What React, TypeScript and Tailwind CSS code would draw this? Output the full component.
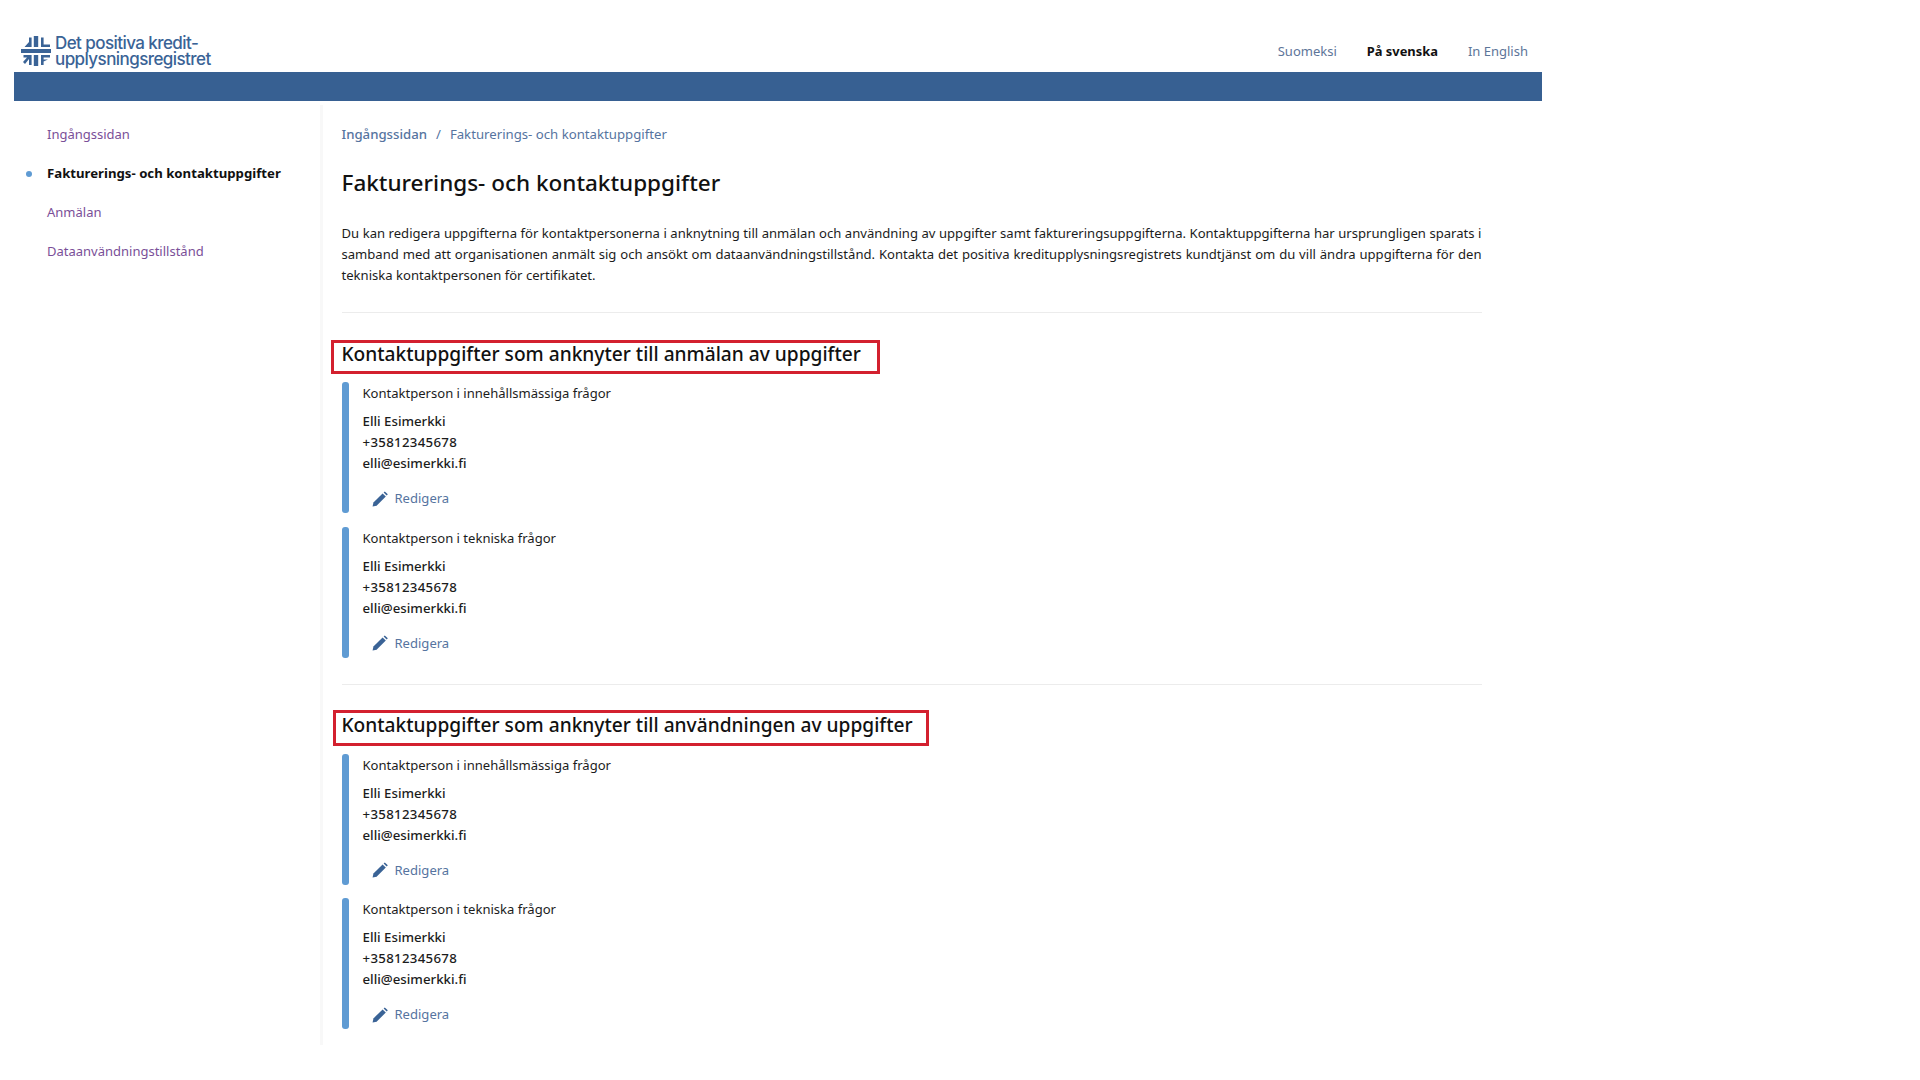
import React from "react";

function Pencil() {
  return (
    <svg viewBox="0 0 16 16" className="w-[16px] h-[16px] shrink-0" fill="#3a6396">
      <path d="M0.6 15.6 L1.4 11.4 L10.6 2.4 L13.8 5.5 L4.6 14.7 Z" />
      <path d="M11.6 1.6 L12.8 0.4 L15.8 3.3 L14.7 4.6 Z" />
    </svg>
  );
}

function Logo() {
  return (
    <svg viewBox="0 0 30 30" className="w-[30px] h-[30px] shrink-0" fill="#3a6396">
      <rect x="0" y="13" width="30" height="4" />
      <rect x="12.8" y="0" width="4.4" height="11" />
      <rect x="12.8" y="19" width="4.4" height="11" />
      <path d="M3.5 11 L10.6 11 L10.6 1.5 L8 1.5 L8 6 Z" />
      <path d="M20 1.5 L22.6 1.5 L22.6 8.5 L29 8.5 L29 11 L20 11 Z" />
      <path d="M2.5 19 L10.6 19 L10.6 29 L8 29 L8 23 L4 28 L2 26 L6 21.5 L2.5 21.5 Z" />
      <path d="M20 19 L29 19 L29 21.5 L22.6 21.5 L22.6 23.5 L27 23.5 L22.6 25.5 L22.6 29 L20 29 Z" />
    </svg>
  );
}

function Card({ title }: { title: string }) {
  return (
    <div className="flex h-[131px]">
      <div className="w-[7px] rounded-[3px] bg-[#5f9bd3] shrink-0" />
      <div className="ml-[14px] pt-[1px] text-[13.05px] leading-[21px] text-[#1c1c1c]">
        <div>{title}</div>
        <div className="mt-[7px] font-medium text-[13.25px]">
          <div>Elli Esimerkki</div>
          <div className="tracking-[0.3px]">+35812345678</div>
          <div>elli@esimerkki.fi</div>
        </div>
        <a className="mt-[14px] ml-[9.5px] flex items-center gap-[6.5px] text-[#56749f]">
          <Pencil />
          <span>Redigera</span>
        </a>
      </div>
    </div>
  );
}

function Section({ title, boxClass }: { title: string; boxClass: string }) {
  return (
    <section>
      <h2 className={"border-[3px] border-[#d3202f] text-[19.15px] leading-[22px] font-medium text-[#111] whitespace-nowrap " + boxClass}>
        {title}
      </h2>
      <div className="mt-[8px] flex flex-col gap-[13.5px]">
        <Card title="Kontaktperson i innehållsmässiga frågor" />
        <Card title="Kontaktperson i tekniska frågor" />
      </div>
    </section>
  );
}

export default function App() {
  return (
    <div className="w-[1920px] h-[1080px] bg-white overflow-hidden font-['Noto_Sans','Open_Sans',sans-serif]">
      <div className="w-[1528px] ml-[14px]">
        <header className="h-[72px] flex items-end justify-between">
          <div className="flex items-end gap-[4px] ml-[7px] mb-[6px]">
            <Logo />
            <div className="font-['Inter',sans-serif] font-medium text-[17px] leading-[16px] tracking-[-0.57px] text-[#3a6396] mb-[-1px]">
              <div>Det positiva kredit-</div>
              <div>upplysningsregistret</div>
            </div>
          </div>
          <nav className="flex gap-[30px] text-[13px] leading-[21px] mr-[14px] mb-[10px]">
            <a className="text-[#5d7599]">Suomeksi</a>
            <a className="font-bold text-[#111] text-[12.9px]">På svenska</a>
            <a className="text-[#5d7599]">In English</a>
          </nav>
        </header>
        <div className="h-[29px] bg-[#376092]" />
        <div className="flex h-[940px] mt-[4px]">
          <aside className="w-[309px] shrink-0 pt-[19px] border-r-[3px] border-[#f8f8f8] text-[13px] leading-[21px] text-[#7a4f98]">
            <ul className="flex flex-col gap-[18px] pl-[33px]">
              <li>Ingångssidan</li>
              <li className="relative font-bold text-[#111] text-[13.2px]">
                <span className="absolute left-[-21px] top-[8px] w-[6px] h-[6px] rounded-full bg-[#5f9bd3]" />
                Fakturerings- och kontaktuppgifter
              </li>
              <li>Anmälan</li>
              <li>Dataanvändningstillstånd</li>
            </ul>
          </aside>
          <main className="w-[1159px] ml-[18.5px] pt-[19px]">
            <div className="text-[13.2px] leading-[21px] text-[#56749f]">
              <span className="font-medium">Ingångssidan</span>
              <span className="mx-[9px]">/</span>
              <span>Fakturerings- och kontaktuppgifter</span>
            </div>
            <h1 className="mt-[21px] text-[22.5px] leading-[34px] font-medium text-[#111]">Fakturerings- och kontaktuppgifter</h1>
            <p className="mt-[23px] w-[1140px] text-justify text-[13.08px] leading-[21px] text-[#1c1c1c]">
              Du kan redigera uppgifterna för kontaktpersonerna i anknytning till anmälan och användning av uppgifter samt faktureringsuppgifterna. Kontaktuppgifterna har ursprungligen sparats i samband med att organisationen anmält sig och ansökt om dataanvändningstillstånd. Kontakta det positiva kreditupplysningsregistrets kundtjänst om du vill ändra uppgifterna för den tekniska kontaktpersonen för certifikatet.
            </p>
            <hr className="mt-[26px] w-[1140px] border-t border-[#ececec]" />
            <div className="mt-[27px]">
              <Section title="Kontaktuppgifter som anknyter till anmälan av uppgifter" boxClass="ml-[-10.5px] w-[549px] h-[34px] pl-[7.5px]" />
            </div>
            <hr className="mt-[26px] w-[1140px] border-t border-[#ececec]" />
            <div className="mt-[25px]">
              <Section title="Kontaktuppgifter som anknyter till användningen av uppgifter" boxClass="ml-[-8.5px] w-[596px] h-[36px] pl-[5.5px] pt-[1px]" />
            </div>
          </main>
        </div>
      </div>
    </div>
  );
}
